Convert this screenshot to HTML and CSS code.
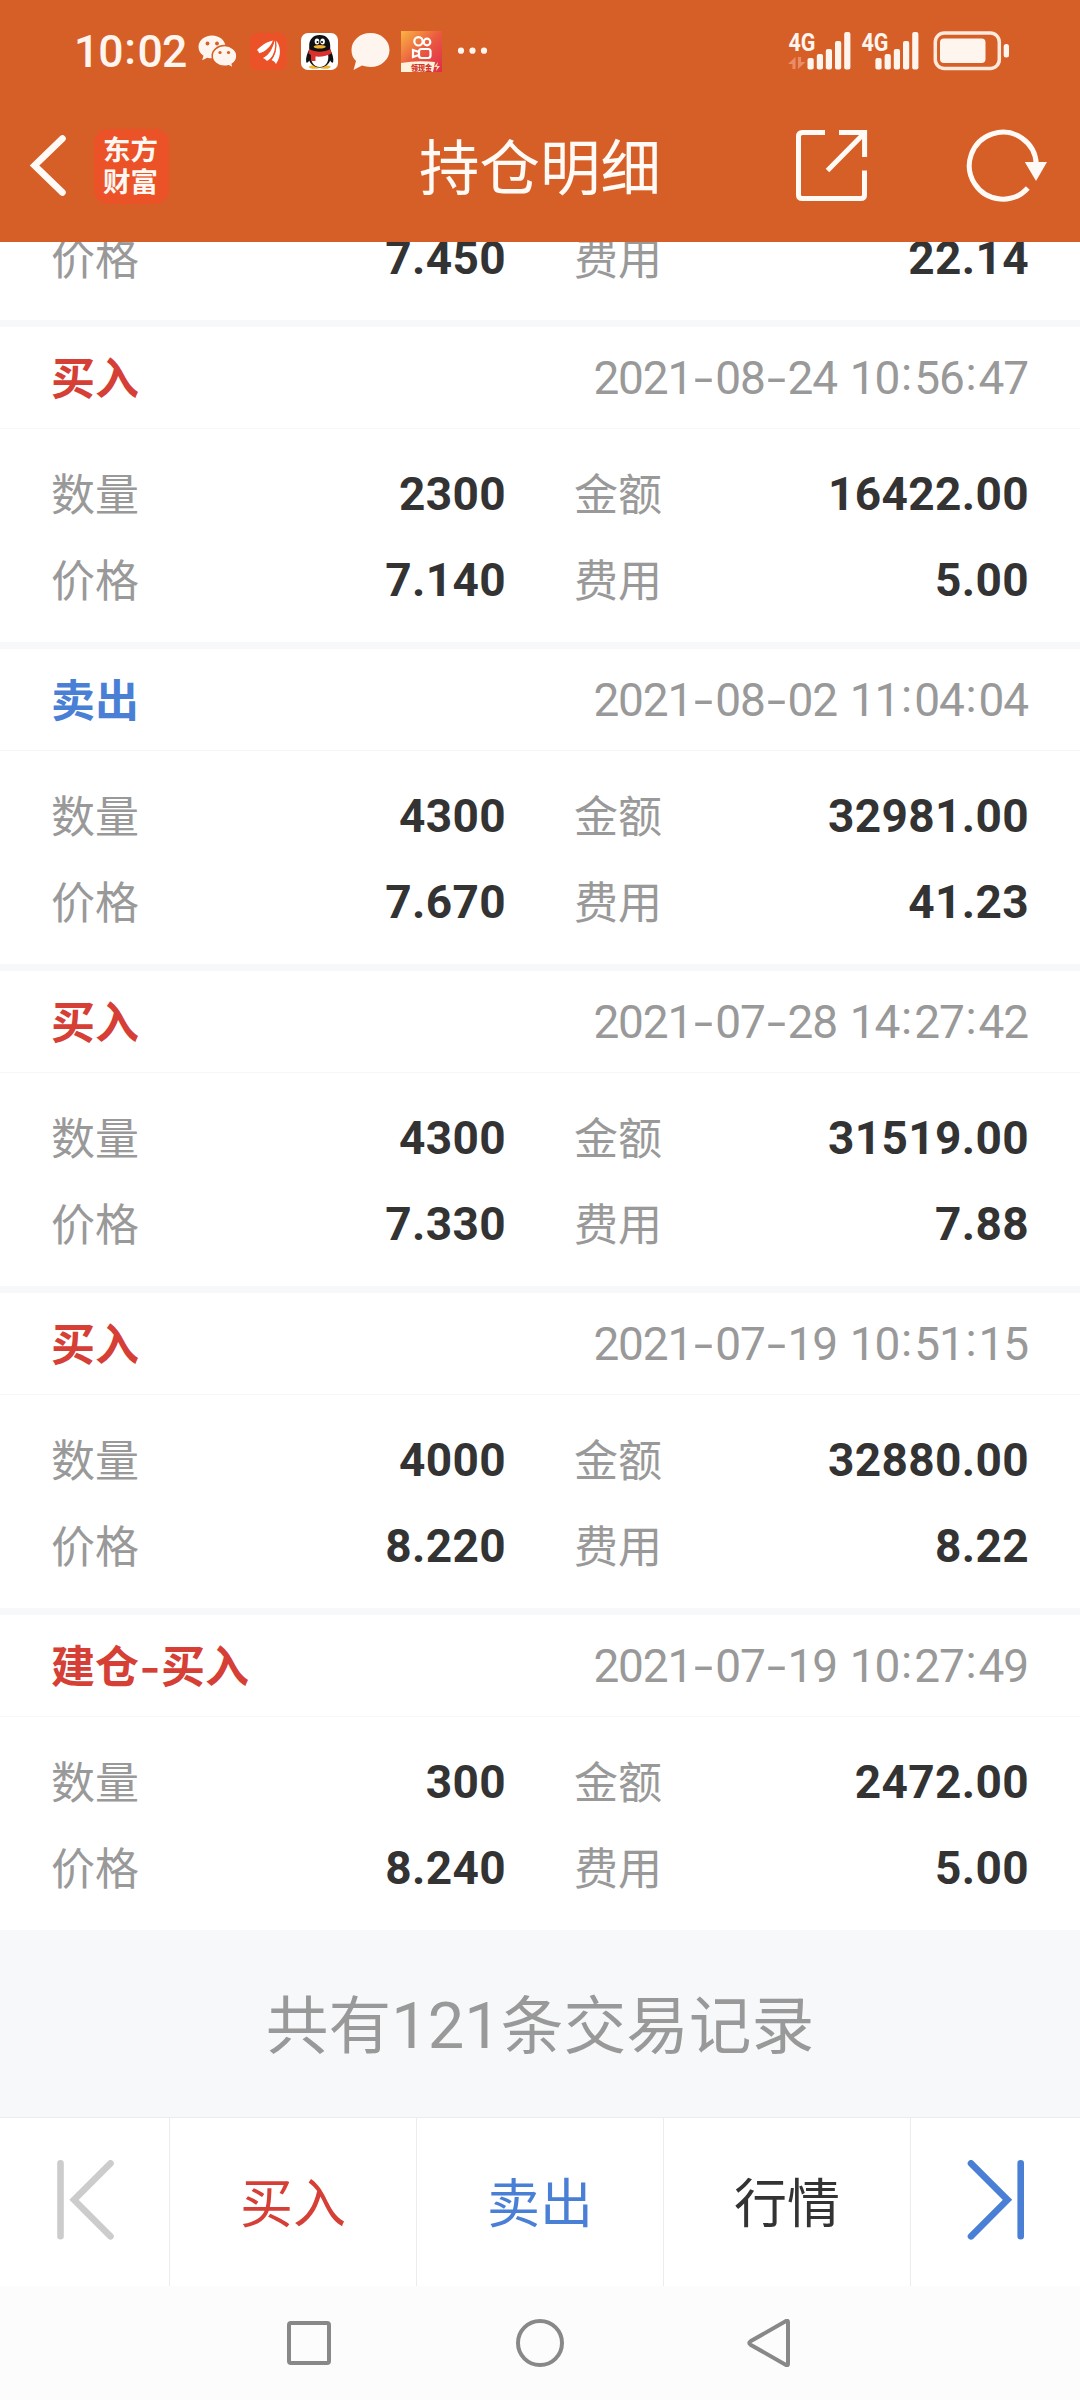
FILE: index.html
```html
<!DOCTYPE html>
<html lang="zh-CN">
<head>
<meta charset="utf-8">
<title>持仓明细</title>
<link rel="stylesheet" href="styles.css">
</head>
<body>
<div class="screen">
  <header class="top">
    <div class="status">
      <span class="clock">10<i class="tc">:</i>02</span>
      <svg class="apps" width="294" height="48" viewBox="196 27 294 48">
        <path fill="#fef5ef" d="M212 35.5c-7.600 0-13.500 5-13.500 11.400 0 3.600 1.900 6.700 5 8.800l-1.300 4.600 5-2.600c1.500.4 3 .6 4.800.6 7.600 0 13.500-5 13.500-11.400s-5.900-11.400-13.500-11.400z"/>
        <path fill="#fef5ef" stroke="#d65f27" stroke-width="1.500" d="M224.500 45.500c-6.800 0-12.300 4.700-12.300 10.400s5.500 10.400 12.300 10.400c1.500 0 3-.2 4.300-.6l4.500 2.500-1.100-4.100c2.900-1.900 4.700-4.800 4.700-8.200 0-5.700-5.600-10.400-12.400-10.400z"/>
        <g fill="#d65f27"><circle cx="207.500" cy="43.500" r="1.900"/><circle cx="217" cy="43.500" r="1.900"/><circle cx="220" cy="52.500" r="1.600"/><circle cx="228.500" cy="52.500" r="1.600"/></g>
        <rect x="250" y="33" width="37" height="37" rx="7" fill="#ec5228"/>
        <g fill="#fff"><path d="M257 50c4-4 9-8 16-9.500-2 5-7 11.500-14 12.800 0-1-.5-2-2-3.300z"/><path d="M263 58c6-3 10-9 11.500-18.500 4 6 1 17-7.500 21.500-1.500-1.500-2-2-4-3z"/><path d="M271.500 60c3.500-4 5.500-12 4-20 5 5 6.500 15 .5 24-1-2-2.500-3.300-4.500-4z"/></g>
        <path stroke="#ec5228" stroke-width="1.400" fill="none" d="M274.500 39q-3 12-13 17M275.500 40q2 13-6 21"/>
        <rect x="301" y="33" width="37" height="37" rx="7" fill="#fff"/>
        <ellipse cx="314.500" cy="67" rx="5.500" ry="1.800" fill="#f4b52c"/><ellipse cx="325" cy="67" rx="5.500" ry="1.800" fill="#f4b52c"/>
        <path fill="#111" d="M319.700 35c-7 0-10.500 5-10.500 10.500v4c-2 4-3.700 8.500-3 12.500.5 1.500 2 .5 3-1.500 1.500 4 5.500 7 10.500 7s9-3 10.500-7c1 2 2.500 3 3 1.500.7-4-1-8.500-3-12.500v-4C330.200 40 326.700 35 319.700 35z"/>
        <path fill="#fff" d="M311.500 54h16.500c1.500 7-2 13-8.300 13s-9.700-6-8.200-13z"/>
        <path fill="#d9322d" d="M309 49c7 3.500 14.500 3.500 21.500 0l1 4.500c-4 2.500-10 3.500-16 3v4.500h-4.500v-6l-2.500-1.500z"/>
        <ellipse cx="317" cy="41.500" rx="2.300" ry="3" fill="#fff"/><ellipse cx="322.600" cy="41.500" rx="2.300" ry="3" fill="#fff"/><circle cx="317.500" cy="42" r="1"/><circle cx="322" cy="42" r="1"/>
        <ellipse cx="319.700" cy="46.700" rx="6" ry="1.700" fill="#f4b52c"/>
        <path fill="#fef5ef" d="M370.500 33c-10.700 0-19 7.400-19 16.900 0 4.600 1.500 8.200 4.500 11l-2.500 9 8.500-4.300c2.600.9 5.400 1.300 8.500 1.300 10.700 0 19-7.500 19-17s-8.300-16.900-19-16.900z"/>
        <defs><linearGradient id="ks" x1="0" y1="0" x2="1" y2="1"><stop offset="0" stop-color="#f9b445"/><stop offset=".5" stop-color="#ea5a3e"/><stop offset="1" stop-color="#e02b50"/></linearGradient></defs>
        <rect x="401" y="31" width="41" height="41" fill="url(#ks)"/>
        <g fill="none" stroke="#fff" stroke-width="2.200"><circle cx="418.500" cy="41.300" r="4.200"/><circle cx="427" cy="42" r="3.300"/><rect x="419" y="49" width="11.500" height="9" rx="2.500"/><path d="M419 52l-6-2v7l6-2"/></g>
        <path fill="#fff2dc" d="M401 63q16-3 34-1l-2 10h-32z"/>
        <text x="411" y="70.500" font-size="7.500" font-weight="900" fill="#d33428" textLength="21" lengthAdjust="spacingAndGlyphs">领现金</text>
        <path fill="#ffe2a0" d="M438 62l-4 5h3l-1 4 4-5h-3z"/>
        <g fill="#fef5ef"><circle cx="461" cy="50.700" r="3.100"/><circle cx="472.500" cy="50.700" r="3.100"/><circle cx="484" cy="50.700" r="3.100"/></g>
      </svg>
      <svg class="signals" width="224" height="48" viewBox="787 27 224 48">
        <g fill="#fef5ef">
          <text class="net" x="788.500" y="51" textLength="27" lengthAdjust="spacingAndGlyphs">4G</text>
          <text class="net" x="861.500" y="51" textLength="27" lengthAdjust="spacingAndGlyphs">4G</text>
          <rect x="807.500" y="58" width="6.200" height="11.500" rx="2"/><rect x="816.800" y="54" width="6.200" height="15.500" rx="2"/><rect x="825.800" y="49" width="6.200" height="20.500" rx="2"/><rect x="835" y="41" width="6.200" height="28.500" rx="2"/><rect x="844.200" y="32" width="6.200" height="37.500" rx="2"/>
          <rect x="875.400" y="58" width="6.200" height="11.500" rx="2"/><rect x="884.600" y="54" width="6.200" height="15.500" rx="2"/><rect x="893.800" y="49" width="6.200" height="20.500" rx="2"/><rect x="903" y="41" width="6.200" height="28.500" rx="2"/><rect x="912.200" y="32" width="6.200" height="37.500" rx="2"/>
          <rect x="940" y="38.500" width="45.500" height="24.500" rx="4"/><rect x="1003.700" y="44" width="5.300" height="13.500" rx="2.500"/>
        </g>
        <path fill="#e98d68" d="M795.500 57v12h-3v-5h-4.500zM798 57h3v5h4.500l-7.500 7z"/>
        <rect x="935.300" y="33" width="64" height="35.500" rx="9" fill="none" stroke="#fdeadd" stroke-width="3.500"/>
      </svg>
    </div>
    <div class="bar">
      <svg width="40" height="66" viewBox="28 133 40 66"><path d="M62.500 138.500L34.500 165.500l28 27" fill="none" stroke="#fffaf5" stroke-width="6.600" stroke-linecap="round"/></svg>
      <div class="logo"><span>东方</span><span>财富</span></div>
      <h1 class="title">持仓明细</h1>
      <svg width="72" height="72" viewBox="796 130 72 72"><g fill="none" stroke="#fffaf5" stroke-width="5"><path d="M825 132.600h-22.500q-4 0-4 4v58.500q0 3.500 4 3.500h58q4 0 4-3.500V170.500"/><path d="M839 132.600h25.600V157M827.500 170.500l37-37.500"/></g></svg>
      <svg class="reload" width="82" height="74" viewBox="965 129 82 74"><path d="M1035.300 164a33.500 33.500 0 1 0-8.500 24" fill="none" stroke="#fffaf5" stroke-width="5"/><path d="M1023.800 162h22.200l-11 19z" fill="#fffaf5"/></svg>
    </div>
  </header>

  <main class="list">
    <section class="record record-cut">
      <div class="row"><span class="label">价格</span><b class="value">7.450</b><span class="label">费用</span><b class="value">22.14</b></div>
    </section>
    <section class="record">
      <div class="head"><span class="kind buy">买入</span><time class="date">2021<i>-</i>08<i>-</i>24 10<em>:</em>56<em>:</em>47</time></div>
      <div class="body">
        <div class="row"><span class="label">数量</span><b class="value">2300</b><span class="label">金额</span><b class="value">16422.00</b></div>
        <div class="row"><span class="label">价格</span><b class="value">7.140</b><span class="label">费用</span><b class="value">5.00</b></div>
      </div>
    </section>
    <section class="record">
      <div class="head"><span class="kind sell">卖出</span><time class="date">2021<i>-</i>08<i>-</i>02 11<em>:</em>04<em>:</em>04</time></div>
      <div class="body">
        <div class="row"><span class="label">数量</span><b class="value">4300</b><span class="label">金额</span><b class="value">32981.00</b></div>
        <div class="row"><span class="label">价格</span><b class="value">7.670</b><span class="label">费用</span><b class="value">41.23</b></div>
      </div>
    </section>
    <section class="record">
      <div class="head"><span class="kind buy">买入</span><time class="date">2021<i>-</i>07<i>-</i>28 14<em>:</em>27<em>:</em>42</time></div>
      <div class="body">
        <div class="row"><span class="label">数量</span><b class="value">4300</b><span class="label">金额</span><b class="value">31519.00</b></div>
        <div class="row"><span class="label">价格</span><b class="value">7.330</b><span class="label">费用</span><b class="value">7.88</b></div>
      </div>
    </section>
    <section class="record">
      <div class="head"><span class="kind buy">买入</span><time class="date">2021<i>-</i>07<i>-</i>19 10<em>:</em>51<em>:</em>15</time></div>
      <div class="body">
        <div class="row"><span class="label">数量</span><b class="value">4000</b><span class="label">金额</span><b class="value">32880.00</b></div>
        <div class="row"><span class="label">价格</span><b class="value">8.220</b><span class="label">费用</span><b class="value">8.22</b></div>
      </div>
    </section>
    <section class="record">
      <div class="head"><span class="kind buy">建仓<i>-</i>买入</span><time class="date">2021<i>-</i>07<i>-</i>19 10<em>:</em>27<em>:</em>49</time></div>
      <div class="body">
        <div class="row"><span class="label">数量</span><b class="value">300</b><span class="label">金额</span><b class="value">2472.00</b></div>
        <div class="row"><span class="label">价格</span><b class="value">8.240</b><span class="label">费用</span><b class="value">5.00</b></div>
      </div>
    </section>
  </main>

  <p class="total">共有<span class="count">121</span>条交易记录</p>

  <nav class="tabs">
    <div class="tab"><svg class="skip" width="58" height="80" viewBox="56 2160 58 80"><path d="M60.500 2163.300v73M110.500 2163.300l-36.500 36.500 36.500 36.500" fill="none" stroke="#ccc" stroke-width="6.600" stroke-linecap="round"/></svg></div>
    <div class="tab buy"><span>买入</span></div>
    <div class="tab sell"><span>卖出</span></div>
    <div class="tab"><span>行情</span></div>
    <div class="tab"><svg class="skip" width="58" height="80" viewBox="967 2160 58 80"><path d="M1020.700 2163.300v73M971 2163.300l36.500 36.500-36.500 36.500" fill="none" stroke="#4a7fd6" stroke-width="6.600" stroke-linecap="round"/></svg></div>
  </nav>

  <div class="system">
    <svg width="48" height="48" viewBox="0 0 48 48"><rect x="4" y="4" width="40" height="40" rx="2"/></svg>
    <svg width="48" height="48" viewBox="0 0 48 48"><circle cx="24" cy="24" r="22"/></svg>
    <svg width="48" height="48" viewBox="0 0 48 48"><path d="M41 3q0-2-2-1L3.500 22.300q-2.500 1.700 0 3.400L39 46q2 1 2-1z"/></svg>
  </div>
</div>
</body>
</html>
```

FILE: styles.css
```css
* { box-sizing: border-box; margin: 0; padding: 0; }

body {
  width: 1080px;
  background: #fff;
  font-family: "Noto Sans CJK SC", sans-serif;
  color: #333;
}

i, em { font-style: normal; }
svg { display: block; flex: none; }

.screen {
  display: flex;
  flex-direction: column;
  height: 2400px;
  overflow: hidden;
}

/* Status bar and title bar */
.top {
  flex: none;
  height: 242px;
  background: #d65f27;
}

.status {
  display: flex;
  align-items: center;
  height: 102px;
  padding: 0 69px 0 74px;
}

.clock {
  width: 122px;
  padding-top: 1px;
  font: 500 44.500px/48px Roboto, sans-serif;
  letter-spacing: -1px;
  color: #fef5ef;
  white-space: nowrap;
}

.tc {
  display: inline-block;
  width: 15px;
  letter-spacing: 0;
  text-align: center;
  transform: translateY(-3px);
}

.signals { margin-left: auto; }
.net { font: 700 26.500px Roboto, sans-serif; }

.bar {
  display: grid;
  grid-template-columns: 66px 75px 627px 72px 1fr;
  align-items: center;
  height: 128px;
  padding: 0 32px 0 28px;
}

.reload { justify-self: end; }

.logo {
  display: flex;
  flex-direction: column;
  justify-content: center;
  align-items: center;
  height: 75px;
  padding: 0 2px 4px 0;
  border-radius: 14px;
  background: #eb5228;
  color: #fff8f2;
  font: 700 27.500px/32px "Noto Sans CJK SC", sans-serif;
}

.title {
  padding: 0 0 5px 250px;
  font-size: 60.500px;
  font-weight: 400;
  line-height: 74px;
  color: #fffaf5;
}

/* Trade records */
.list { flex: none; }

.record {
  height: 322px;
  border-bottom: 7px solid #f7f8fa;
}

.record:last-child {
  height: 315px;
  border-bottom: 0;
}

.record-cut {
  display: flex;
  flex-direction: column;
  justify-content: flex-end;
  height: 85px;
  padding-bottom: 20px;
  overflow: hidden;
}

.head {
  display: flex;
  justify-content: space-between;
  align-items: center;
  height: 102px;
  padding: 0 52px 0 51px;
  border-bottom: 1px solid #f5f6f8;
}

.kind {
  padding-bottom: 3px;
  font-size: 44px;
  font-weight: 700;
  line-height: 60px;
}

.kind i {
  display: inline-block;
  width: 22px;
  text-align: center;
  transform: scaleX(1.250);
}

.buy { color: #d53f36; }
.sell { color: #4a7fd6; }

.date {
  padding-top: 1px;
  font: 400 46px/60px Roboto, sans-serif;
  letter-spacing: -1.150px;
  word-spacing: 2.500px;
  color: #999;
}

.date i, .date em {
  display: inline-block;
  letter-spacing: 0;
  text-align: center;
}

.date i { width: 23px; transform: scaleX(1.500); }
.date em { width: 15px; transform: translateY(-4px); }

.body { padding-top: 21px; }

.row {
  display: grid;
  grid-template-columns: 100px 355px 169px 1fr;
  flex: none;
  align-items: center;
  height: 86px;
  padding: 0 51px;
}

.label {
  padding-bottom: 3px;
  font-size: 44px;
  line-height: 60px;
  color: #999;
}

.row .label:nth-child(3) { margin-left: 68px; }

.value {
  padding-top: 2px;
  font: 700 46px/60px Roboto, sans-serif;
  letter-spacing: 0.350px;
  text-align: right;
}

/* Record count */
.total {
  flex: none;
  height: 187px;
  background: #f7f8fa;
  color: #999;
  font-size: 62.700px;
  line-height: 181px;
  text-align: center;
}

.count { font: 400 65px/1 Roboto, sans-serif; }

/* Bottom actions */
.tabs {
  display: grid;
  grid-template-columns: 170px 247px 247px 247px 1fr;
  flex: none;
  height: 169px;
  border-top: 1px solid #ececee;
}

.tab {
  display: flex;
  align-items: center;
  justify-content: center;
  border-right: 1px solid #ececee;
  font-size: 53px;
  line-height: 72px;
}

.tab:last-child { border-right: 0; }
.tab span { padding-bottom: 4px; }
.skip { margin: -4px 0 0 1px; }

/* System navigation */
.system {
  display: flex;
  justify-content: center;
  align-items: center;
  gap: 183px;
  height: 114px;
  background: #fcfcfc;
  fill: none;
  stroke: #888;
  stroke-width: 4px;
}
```
